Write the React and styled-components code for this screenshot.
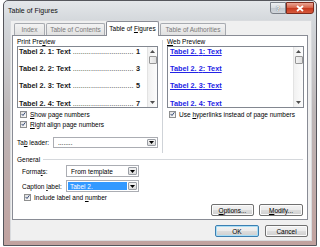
import React from "react";
import styled, { createGlobalStyle } from "styled-components";

const GlobalStyle = createGlobalStyle`
  html, body { margin: 0; padding: 0; background: #fff; }
  body {
    font-family: "Liberation Sans", Arial, sans-serif;
    font-size: 6.5px;
    color: #000;
  }
  * { box-sizing: border-box; }
  u { text-decoration: underline; }
`;

const Window = styled.div`
  margin-left: 3px;
  width: 314px;
  height: 246px;
  display: flex;
  flex-direction: column;
  border: 1px solid #55565c;
  border-radius: 5px 5px 0 0;
  background: linear-gradient(#e4e7ea 0, #d4d8dc 19px, #bdb7b8 110px, #c1a29f 100%);
  padding: 0 4px 4px 6px;
`;

const TitleBar = styled.div`
  height: 19px;
  display: flex;
  align-items: flex-start;
`;

const Title = styled.div`
  margin: 5px 0 0 -2px;
  font-size: 7px;
  line-height: 9px;
  color: #111;
`;

const CaptionButtons = styled.div`
  margin: 1px -2px 0 auto;
  display: flex;
`;

const CaptionButton = styled.div`
  width: ${(p) => p.$w}px;
  height: 12px;
  display: flex;
  align-items: center;
  justify-content: center;
  border: 1px solid ${(p) => (p.$close ? "#7d2a1c" : "#7b8088")};
  border-radius: ${(p) => (p.$close ? "0 0 3px 0" : "0 0 0 3px")};
  background: ${(p) =>
    p.$close
      ? "linear-gradient(#eaa594, #d8664c 45%, #c73a20 55%, #d65a3c)"
      : "linear-gradient(#eef0f2, #d9dde1 45%, #c3c9cf 55%, #d2d7dc)"};
  color: #fff;
  font-size: 7px;
  font-weight: bold;
  text-shadow: 0 0 1px #333;
`;

const Client = styled.div`
  flex: 1;
  display: flex;
  flex-direction: column;
  background: #f0f0f0;
  border: 1px solid #d9dbde;
  padding: 0 3px 0 1px;
`;

const TabStrip = styled.div`
  height: 14px;
  display: flex;
  align-items: flex-end;
  padding-left: 2px;
  gap: 1px;
`;

const Tab = styled.div`
  width: ${(p) => p.$w}px;
  height: ${(p) => (p.$active ? 15 : 12)}px;
  margin-bottom: ${(p) => (p.$active ? -1 : 0)}px;
  position: relative;
  z-index: ${(p) => (p.$active ? 2 : 0)};
  display: flex;
  align-items: center;
  justify-content: center;
  border: 1px solid ${(p) => (p.$active ? "#898c95" : "#a7aab0")};
  border-bottom: none;
  border-radius: 2px 2px 0 0;
  background: ${(p) => (p.$active ? "#fff" : "linear-gradient(#f3f3f3, #e1e1e1)")};
  color: ${(p) => (p.$active ? "#000" : "#7a7a7a")};
  padding-bottom: ${(p) => (p.$active ? 2 : 0)}px;
  white-space: pre;
`;

const Panel = styled.div`
  height: 185px;
  display: flex;
  flex-direction: column;
  border: 1px solid #898c95;
  background: #fff;
  padding: 1px 3px 0 4px;
`;

const TopSection = styled.div`
  height: 118px;
  display: flex;
`;

const Column = styled.div`
  width: ${(p) => p.$w}px;
  display: flex;
  flex-direction: column;
`;

const Separator = styled.div`
  width: 1px;
  margin: 3px 4px 2px 4px;
  background: #cfd3d8;
`;

const Label = styled.div`
  height: 9px;
  line-height: 9px;
  white-space: nowrap;
`;

const ListBox = styled.div`
  height: 62px;
  display: flex;
  border: 1px solid #828790;
  background: #fff;
`;

const ListContent = styled.div`
  flex: 1;
  overflow: hidden;
  padding: 0 7px 0 1px;
`;

const Entry = styled.div`
  height: 17.2px;
  line-height: 9px;
  display: flex;
  font-size: 7.3px;
  font-weight: bold;
  white-space: nowrap;
  color: ${(p) => (p.$link ? "#2323e6" : "#1a1a1a")};
  text-decoration: ${(p) => (p.$link ? "underline" : "none")};
  padding-left: ${(p) => (p.$link ? 1 : 0)}px;
`;

const Leader = styled.span`
  flex: 1;
  margin: 0 2px;
  font-weight: normal;
`;

const ScrollBar = styled.div`
  width: 10px;
  display: flex;
  flex-direction: column;
  align-items: center;
  background: linear-gradient(90deg, #f1f1f1, #fcfcfc);
  border-left: 1px solid #e3e3e3;
`;

const ScrollArrow = styled.div`
  height: 9px;
  width: 100%;
  display: flex;
  align-items: center;
  justify-content: center;
`;

const Track = styled.div`
  flex: 1;
`;

const Thumb = styled.div`
  width: 8px;
  height: 8px;
  border: 1px solid #979797;
  border-radius: 1px;
  background: linear-gradient(90deg, #f3f3f3, #e0e0e0);
`;

const CheckRow = styled.div`
  height: 10px;
  margin-top: ${(p) => p.$mt || 0}px;
  padding-left: ${(p) => p.$indent}px;
  display: flex;
  align-items: center;
  gap: 3px;
  white-space: nowrap;
`;

const Box = styled.div`
  width: 7px;
  height: 7px;
  border: 1px solid #8e8f8f;
  background: linear-gradient(135deg, #dcdcdc, #fbfbfb);
  display: flex;
  align-items: center;
  justify-content: center;
`;

const FieldRow = styled.div`
  height: ${(p) => p.$h}px;
  margin-top: ${(p) => p.$mt || 0}px;
  padding-left: ${(p) => p.$indent || 0}px;
  display: flex;
  align-items: center;
`;

const FieldLabel = styled.div`
  width: ${(p) => p.$w}px;
  white-space: nowrap;
`;

const Dropdown = styled.div`
  width: ${(p) => p.$w}px;
  height: 100%;
  display: flex;
  align-items: center;
  border: 1px solid #abadb3;
  background: #fff;
  padding: 1px;
`;

const DropText = styled.div`
  flex: 1;
  height: 100%;
  display: flex;
  align-items: center;
  padding-left: ${(p) => (p.$selected ? 2 : 3)}px;
  margin-right: ${(p) => (p.$selected ? 1 : 0)}px;
  background: ${(p) => (p.$selected ? "#3399ff" : "transparent")};
  color: ${(p) => (p.$selected ? "#fff" : "#000")};
  white-space: nowrap;
`;

const DropArrow = styled.div`
  width: 9px;
  height: 100%;
  display: flex;
  align-items: center;
  justify-content: center;
  border: 1px solid #9a9ea5;
  border-radius: 1px;
  background: linear-gradient(#f4f4f4, #dcdcdc);
`;

const GroupHeader = styled.div`
  height: 8px;
  display: flex;
  align-items: center;
  gap: 3px;
  margin-right: 1px;
`;

const GroupLine = styled.div`
  flex: 1;
  height: 1px;
  background: #d5d8dc;
`;

const ButtonRow = styled.div`
  display: flex;
  justify-content: flex-end;
  gap: ${(p) => p.$gap}px;
  margin-top: ${(p) => p.$mt}px;
  margin-right: ${(p) => p.$mr || 0}px;
`;

const Button = styled.div`
  width: ${(p) => p.$w}px;
  height: 12px;
  display: flex;
  align-items: center;
  justify-content: center;
  border: 1px solid ${(p) => (p.$default ? "#3c7fb1" : "#707070")};
  border-radius: 2px;
  background: linear-gradient(#f2f2f2 0%, #ebebeb 50%, #dddddd 51%, #cfcfcf 100%);
  box-shadow: ${(p) => (p.$default ? "inset 0 0 0 1px #a9def6" : "inset 0 0 0 1px #fbfbfb")};
  white-space: nowrap;
`;

const Check = () => (
  <Box>
    <svg width="6" height="6" viewBox="0 0 6 6">
      <path d="M0.8 3 L2.4 4.8 L5.3 0.9" fill="none" stroke="#3a4f7a" strokeWidth="1.2" />
    </svg>
  </Box>
);

const Arrow = ({ up, color = "#000" }) => (
  <svg width="5" height="3" viewBox="0 0 5 3">
    <polygon points={up ? "0,3 5,3 2.5,0" : "0,0 5,0 2.5,3"} fill={color} />
  </svg>
);

const Scroll = () => (
  <ScrollBar>
    <ScrollArrow>
      <Arrow up color="#505050" />
    </ScrollArrow>
    <Thumb />
    <Track />
    <ScrollArrow>
      <Arrow color="#505050" />
    </ScrollArrow>
  </ScrollBar>
);

const entries = [
  ["1", "1"],
  ["2", "3"],
  ["3", "5"],
  ["4", "7"],
];

const dots = ".".repeat(30);

const App = () => (
  <>
    <GlobalStyle />
    <Window>
      <TitleBar>
        <Title>Table of Figures</Title>
        <CaptionButtons>
          <CaptionButton $w={16}>?</CaptionButton>
          <CaptionButton $w={28} $close>
            <svg width="8" height="7" viewBox="0 0 8 7">
              <path d="M1 1 L7 6 M7 1 L1 6" stroke="#fff" strokeWidth="1.8" />
            </svg>
          </CaptionButton>
        </CaptionButtons>
      </TitleBar>
      <Client>
        <TabStrip>
          <Tab $w={31}>Index</Tab>
          <Tab $w={59}>Table of Contents</Tab>
          <Tab $w={53} $active>
            {"Table of "}
            <u>F</u>igures
          </Tab>
          <Tab $w={66}>Table of Authorities</Tab>
        </TabStrip>
        <Panel>
          <TopSection>
            <Column $w={141}>
              <Label>
                Print Pre<u>v</u>iew
              </Label>
              <ListBox>
                <ListContent>
                  {entries.map(([n, p]) => (
                    <Entry key={n}>
                      Tabel 2. {n}: Text
                      <Leader>{dots}</Leader>
                      {p}
                    </Entry>
                  ))}
                </ListContent>
                <Scroll />
              </ListBox>
              <CheckRow $indent={3} $mt={1}>
                <Check />
                <span>
                  <u>S</u>how page numbers
                </span>
              </CheckRow>
              <CheckRow $indent={3}>
                <Check />
                <span>
                  <u>R</u>ight align page numbers
                </span>
              </CheckRow>
              <FieldRow $h={11} $mt={8}>
                <FieldLabel $w={36}>
                  Ta<u>b</u> leader:
                </FieldLabel>
                <Dropdown $w={105}>
                  <DropText>........</DropText>
                  <DropArrow>
                    <Arrow />
                  </DropArrow>
                </Dropdown>
              </FieldRow>
            </Column>
            <Separator />
            <Column $w={137}>
              <Label>
                <u>W</u>eb Preview
              </Label>
              <ListBox>
                <ListContent>
                  {entries.map(([n]) => (
                    <Entry key={n} $link>
                      Tabel 2. {n}: Text
                    </Entry>
                  ))}
                </ListContent>
                <Scroll />
              </ListBox>
              <CheckRow $indent={2} $mt={1}>
                <Check />
                <span>
                  Use <u>h</u>yperlinks instead of page numbers
                </span>
              </CheckRow>
            </Column>
          </TopSection>
          <GroupHeader>
            <span>General</span>
            <GroupLine />
          </GroupHeader>
          <FieldRow $h={12} $mt={2} $indent={5}>
            <FieldLabel $w={44}>
              Forma<u>t</u>s:
            </FieldLabel>
            <Dropdown $w={73}>
              <DropText>From template</DropText>
              <DropArrow>
                <Arrow />
              </DropArrow>
            </Dropdown>
          </FieldRow>
          <FieldRow $h={12} $mt={3} $indent={5}>
            <FieldLabel $w={44}>
              Caption <u>l</u>abel:
            </FieldLabel>
            <Dropdown $w={73}>
              <DropText $selected>Tabel 2.</DropText>
              <DropArrow>
                <Arrow />
              </DropArrow>
            </Dropdown>
          </FieldRow>
          <CheckRow $indent={7}>
            <Check />
            <span>
              Include label and <u>n</u>umber
            </span>
          </CheckRow>
          <ButtonRow $gap={5} $mt={2} $mr={1}>
            <Button $w={43}>
              <span>
                <u>O</u>ptions...
              </span>
            </Button>
            <Button $w={44}>
              <span>
                <u>M</u>odify...
              </span>
            </Button>
          </ButtonRow>
        </Panel>
        <ButtonRow $gap={6} $mt={5}>
          <Button $w={44} $default>
            OK
          </Button>
          <Button $w={43}>Cancel</Button>
        </ButtonRow>
      </Client>
    </Window>
  </>
);

export default App;
